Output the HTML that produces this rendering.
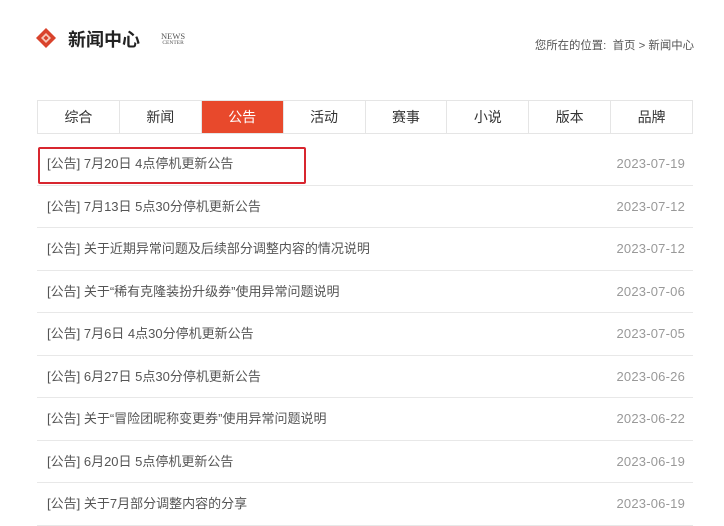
<!DOCTYPE html>
<html><head><meta charset="utf-8"><style>
*{margin:0;padding:0;box-sizing:border-box}
body{width:724px;height:526px;background:#fff;font-family:"Liberation Sans","Noto Sans CJK SC",sans-serif;position:relative;overflow:hidden;color:#333}
.ttl{position:absolute;left:68px;top:28px;font-size:18px;font-weight:bold;color:#222;line-height:24px}
.en{position:absolute;left:161px;top:33px;font-family:"Liberation Serif",serif;font-size:8.5px;line-height:7px;color:#555;text-align:center}
.en small{font-size:5.5px;display:block}
.loc{position:absolute;right:30px;top:37px;font-size:11.4px;color:#555}
.tabs{position:absolute;left:37px;top:100px;width:656px;height:34px;border:1px solid #e5e5e5;display:flex}
.tabs div{flex:1;text-align:center;line-height:32px;font-size:14px;color:#333;border-right:1px solid #e5e5e5}
.tabs div:last-child{border-right:none}
.tabs div.on{background:#e8492c;color:#fff}
.row{position:absolute;left:37px;width:656px;height:42.5px;border-bottom:1px solid #e8e8e8;font-size:13px;line-height:42px;color:#555}
.row span.t{position:absolute;left:10px}
.row span.d{position:absolute;right:8px;color:#999;font-size:13px;letter-spacing:0.2px}
.box{position:absolute;left:38px;top:147px;width:268px;height:37px;border:2px solid #d8262f;border-radius:2px}
</style></head><body>
<svg style="position:absolute;left:35px;top:27px" width="22" height="22" viewBox="0 0 22 22"><path d="M11 1L21 11L11 21L1 11Z" fill="#d9432c"/><path d="M11 6L16 11L11 16L6 11Z" fill="#f6c8b8"/><path d="M11 8.5L13.5 11L11 13.5L8.5 11Z" fill="#d9432c"/></svg>
<div class="ttl">新闻中心</div>
<div class="en">NEWS<small>CENTER</small></div>
<div class="loc">您所在的位置:&nbsp; 首页 &gt; 新闻中心</div>
<div class="tabs"><div>综合</div><div>新闻</div><div class="on">公告</div><div>活动</div><div>赛事</div><div>小说</div><div>版本</div><div>品牌</div></div>
<div class="row" style="top:143px"><span class="t">[公告] 7月20日 4点停机更新公告</span><span class="d">2023-07-19</span></div>
<div class="row" style="top:185.5px"><span class="t">[公告] 7月13日 5点30分停机更新公告</span><span class="d">2023-07-12</span></div>
<div class="row" style="top:228px"><span class="t">[公告] 关于近期异常问题及后续部分调整内容的情况说明</span><span class="d">2023-07-12</span></div>
<div class="row" style="top:270.5px"><span class="t">[公告] 关于“稀有克隆装扮升级券”使用异常问题说明</span><span class="d">2023-07-06</span></div>
<div class="row" style="top:313px"><span class="t">[公告] 7月6日 4点30分停机更新公告</span><span class="d">2023-07-05</span></div>
<div class="row" style="top:355.5px"><span class="t">[公告] 6月27日 5点30分停机更新公告</span><span class="d">2023-06-26</span></div>
<div class="row" style="top:398px"><span class="t">[公告] 关于“冒险团昵称变更券”使用异常问题说明</span><span class="d">2023-06-22</span></div>
<div class="row" style="top:440.5px"><span class="t">[公告] 6月20日 5点停机更新公告</span><span class="d">2023-06-19</span></div>
<div class="row" style="top:483px"><span class="t">[公告] 关于7月部分调整内容的分享</span><span class="d">2023-06-19</span></div>
<div class="box"></div>
</body></html>
